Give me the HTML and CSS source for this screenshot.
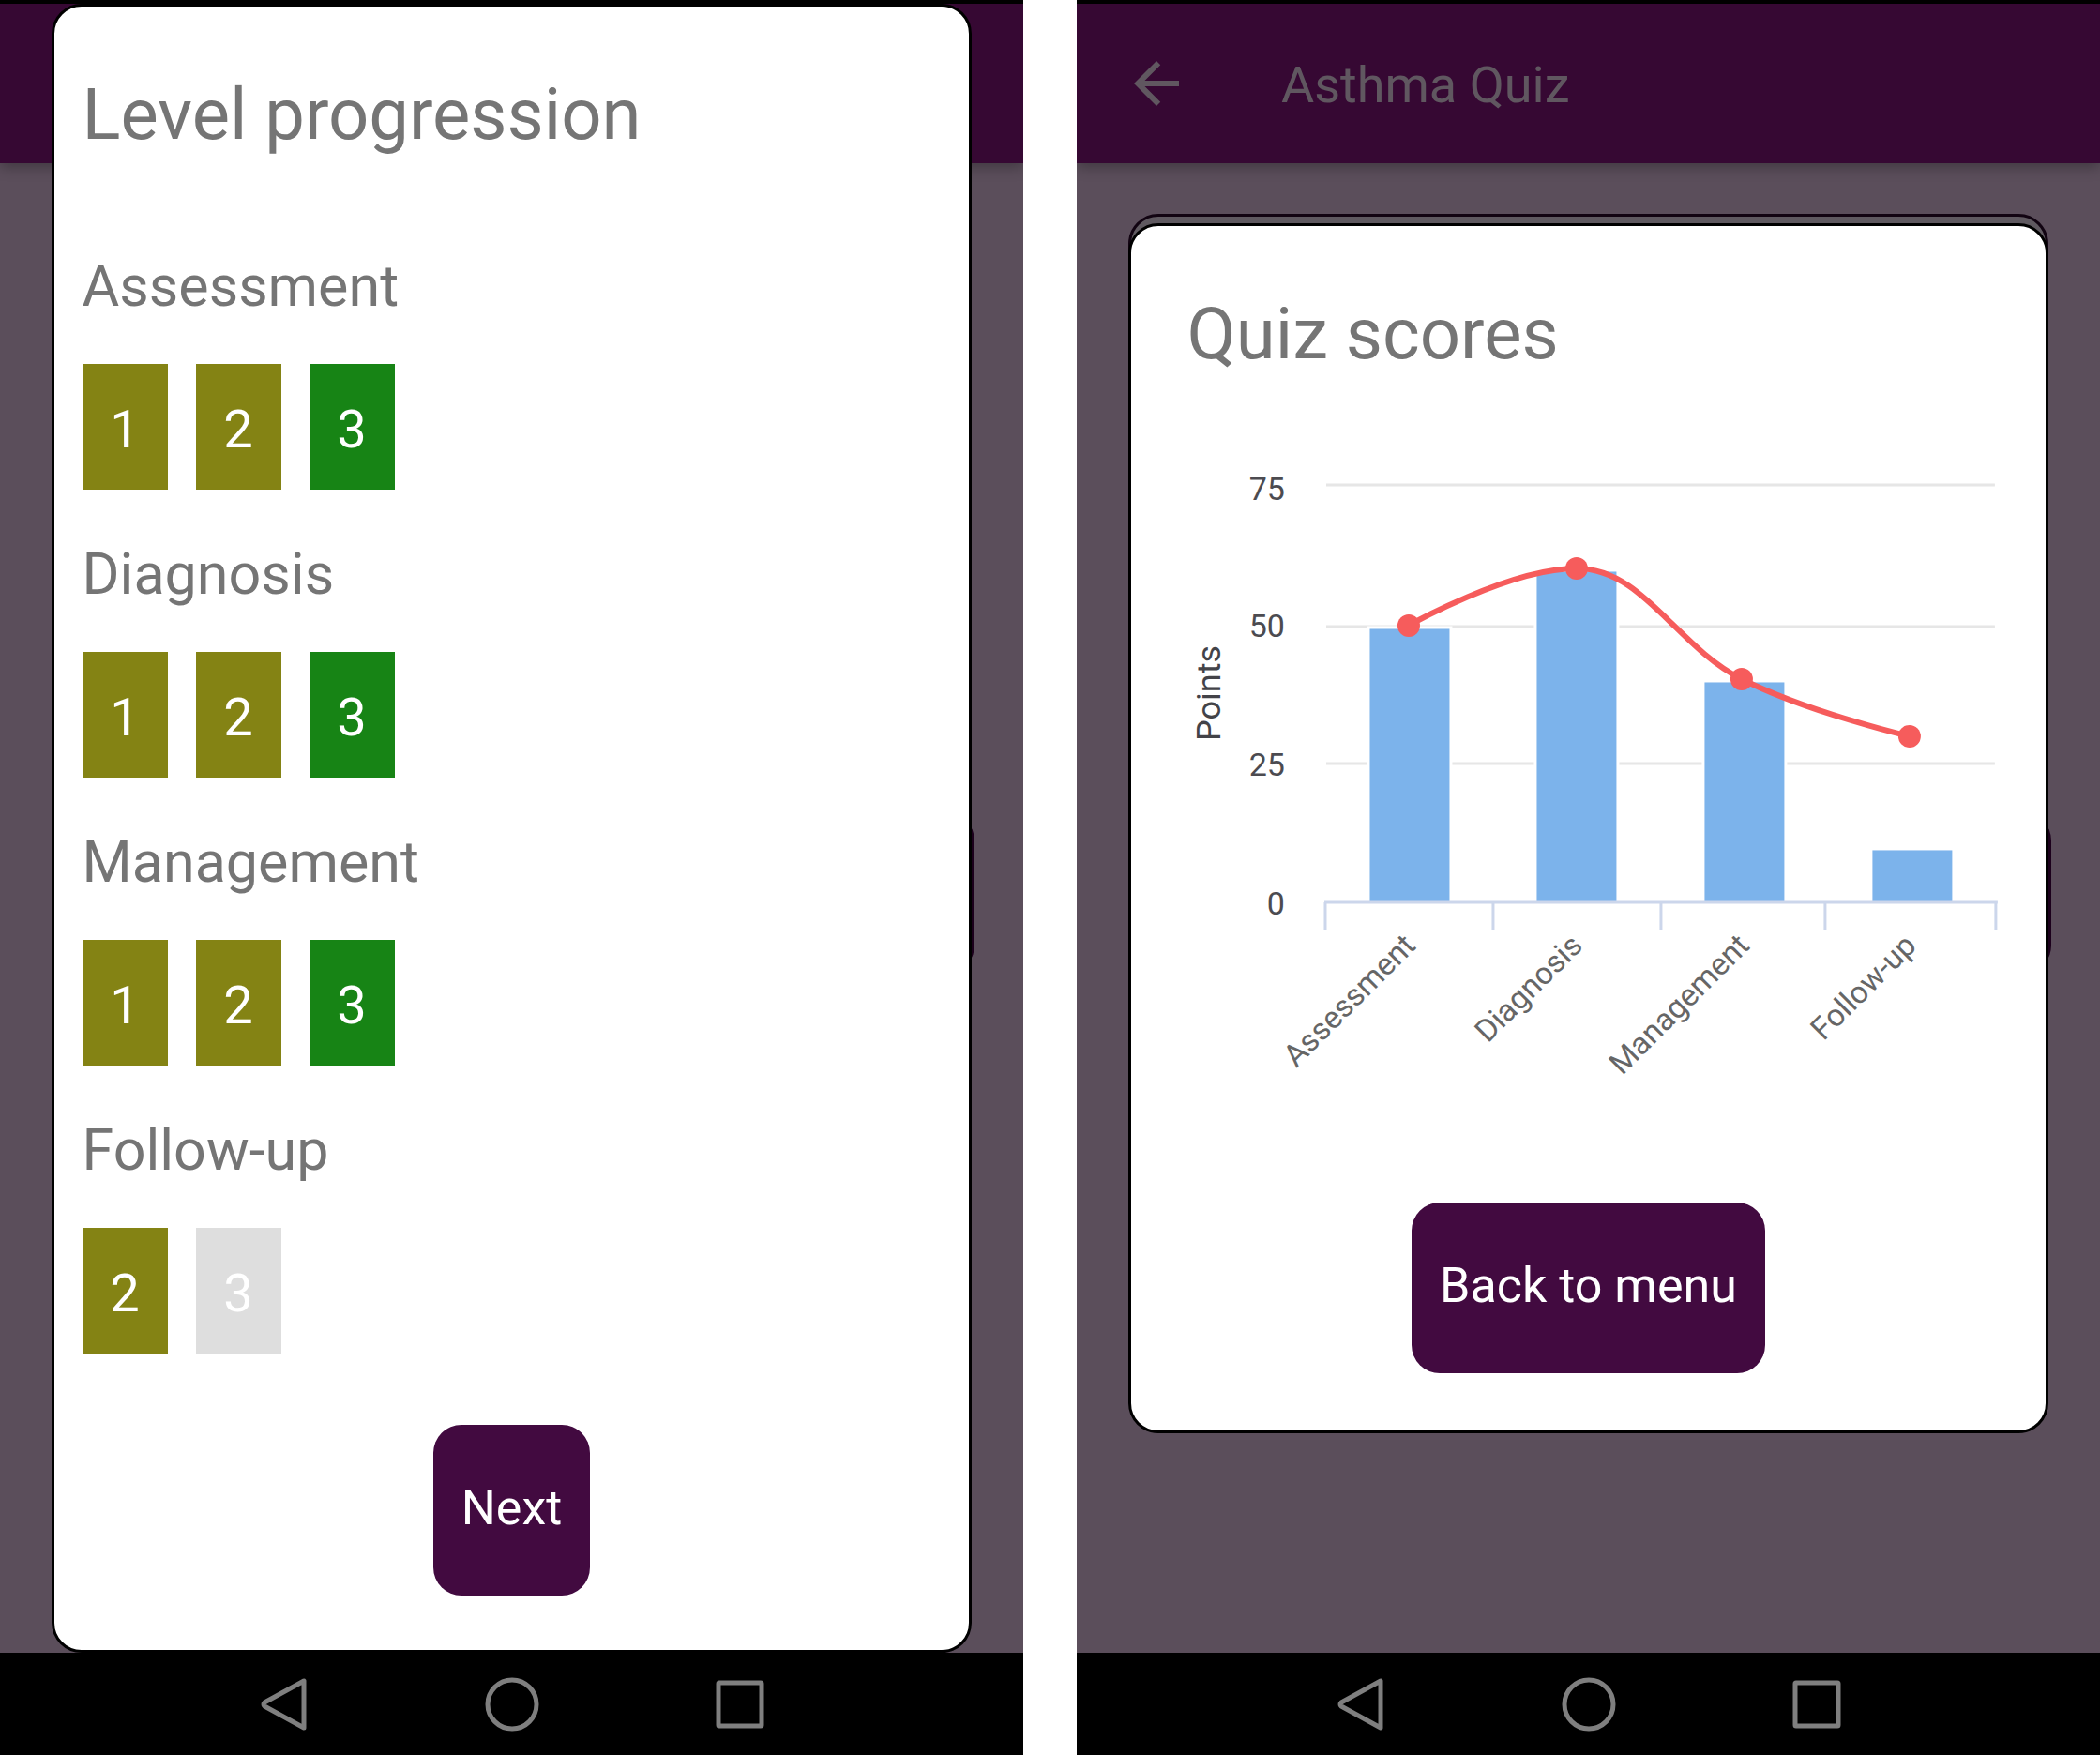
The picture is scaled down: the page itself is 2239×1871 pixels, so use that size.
FILE: index.html
```html
<!DOCTYPE html>
<html lang="en">
<head>
<meta charset="utf-8">
<meta name="viewport" content="width=device-width, initial-scale=1">
<title>Asthma Quiz</title>
<link rel="stylesheet" href="styles.css">
</head>
<body>
<main class="phones">

  <section class="phone">
    <div class="screen">
      <div class="backdrop">
        <header class="app-bar"></header>
        <div class="question-card"><div class="answer"></div></div>
      </div>
      <div class="dialog" role="dialog" aria-labelledby="levels-title">
        <h1 class="dialog-title" id="levels-title">Level progression</h1>
        <div class="topics">
          <section class="topic">
            <h2 class="topic-name">Assessment</h2>
            <ul class="levels">
              <li class="level passed">1</li>
              <li class="level passed">2</li>
              <li class="level current">3</li>
            </ul>
          </section>
          <section class="topic">
            <h2 class="topic-name">Diagnosis</h2>
            <ul class="levels">
              <li class="level passed">1</li>
              <li class="level passed">2</li>
              <li class="level current">3</li>
            </ul>
          </section>
          <section class="topic">
            <h2 class="topic-name">Management</h2>
            <ul class="levels">
              <li class="level passed">1</li>
              <li class="level passed">2</li>
              <li class="level current">3</li>
            </ul>
          </section>
          <section class="topic">
            <h2 class="topic-name">Follow-up</h2>
            <ul class="levels">
              <li class="level passed">2</li>
              <li class="level locked">3</li>
            </ul>
          </section>
        </div>
        <button class="action" type="button">Next</button>
      </div>
    </div>
    <nav class="system-nav">
      <button class="nav-key" type="button" aria-label="Back"><svg viewBox="0 0 58 58"><path d="M50 4v50L8 31q-2-2 0-4z"/></svg></button>
      <button class="nav-key" type="button" aria-label="Home"><svg viewBox="0 0 58 58"><circle cx="29" cy="29" r="26"/></svg></button>
      <button class="nav-key" type="button" aria-label="Recent apps"><svg viewBox="0 0 58 58"><rect x="6" y="6" width="46" height="46" rx="1"/></svg></button>
    </nav>
  </section>

  <section class="phone">
    <div class="screen">
      <div class="backdrop">
        <header class="app-bar">
          <button class="back" type="button" aria-label="Back"><svg viewBox="0 0 24 24"><path d="M20 11H7.83l5.59-5.59L12 4l-8 8 8 8 1.41-1.41L7.83 13H20v-2z"/></svg></button>
          <span class="app-title">Asthma Quiz</span>
        </header>
        <div class="question-card"><div class="answer"></div></div>
      </div>
      <div class="dialog scores" role="dialog" aria-labelledby="scores-title">
        <h1 class="dialog-title" id="scores-title">Quiz scores</h1>
        <svg class="chart" viewBox="0 0 916 720" role="img" aria-labelledby="scores-title">
          <g class="grid">
            <path d="M178 38H891M178 189H891M178 335H891"/>
          </g>
          <g class="bars">
            <rect x="223" y="190" width="88" height="295"/>
            <rect x="401" y="129" width="88" height="356"/>
            <rect x="580" y="247" width="88" height="238"/>
            <rect x="759" y="426" width="88" height="59"/>
          </g>
          <path class="axis" d="M176 483H894M177 483V512M356 483V512M535 483V512M710 483V512M892 483V512"/>
          <path class="trend" d="M266 188C266 188 373 127 445 127C516 127 551 210 621 245C693 281 800 306 800 306"/>
          <g class="points">
            <circle cx="266" cy="188" r="12"/>
            <circle cx="445" cy="127" r="12"/>
            <circle cx="621" cy="245" r="12"/>
            <circle cx="800" cy="306" r="12"/>
          </g>
          <g class="values">
            <text x="134" y="54">75</text>
            <text x="134" y="200">50</text>
            <text x="134" y="348">25</text>
            <text x="134" y="496">0</text>
          </g>
          <text class="axis-name" transform="translate(65 260) rotate(-90)">Points</text>
          <g class="categories">
            <text transform="translate(275 531) rotate(-45)">Assessment</text>
            <text transform="translate(453 531) rotate(-45)">Diagnosis</text>
            <text transform="translate(631 531) rotate(-45)">Management</text>
            <text transform="translate(809 531) rotate(-45)">Follow-up</text>
          </g>
        </svg>
        <button class="action" type="button">Back to menu</button>
      </div>
    </div>
    <nav class="system-nav">
      <button class="nav-key" type="button" aria-label="Back"><svg viewBox="0 0 58 58"><path d="M50 4v50L8 31q-2-2 0-4z"/></svg></button>
      <button class="nav-key" type="button" aria-label="Home"><svg viewBox="0 0 58 58"><circle cx="29" cy="29" r="26"/></svg></button>
      <button class="nav-key" type="button" aria-label="Recent apps"><svg viewBox="0 0 58 58"><rect x="6" y="6" width="46" height="46" rx="1"/></svg></button>
    </nav>
  </section>

</main>
</body>
</html>
```
FILE: styles.css
```css
* {
  box-sizing: border-box;
}

body {
  margin: 0;
  background: #fff;
  font-family: Roboto, "Liberation Sans", sans-serif;
}

button {
  padding: 0;
  border: 0;
  background: none;
  font: inherit;
  color: inherit;
}

svg {
  display: block;
}

.phones {
  display: grid;
  grid-template-columns: 1fr 1fr;
  gap: 57px;
  min-height: 100vh;
}

.phone {
  display: flex;
  flex-direction: column;
  background: #000;
  padding-top: 4px;
}

/* The dimmed app and the open dialog share one grid cell. */
.screen {
  flex: 1;
  display: grid;
  background: #5b4e5b;
}

.backdrop,
.dialog {
  grid-area: 1 / 1;
}

.backdrop {
  display: flex;
  flex-direction: column;
}

.app-bar {
  display: flex;
  align-items: center;
  gap: 97px;
  height: 170px;
  padding: 0 49px;
  background: #360833;
  box-shadow: 0 4px 14px rgba(0, 0, 0, 0.3);
  clip-path: inset(0 0 -24px 0);
  color: #605760;
}

.back svg {
  width: 72px;
  height: 72px;
  fill: currentColor;
}

.app-title {
  padding-top: 4px;
  font-size: 54px;
  line-height: 64px;
}

.question-card {
  flex: 1;
  width: 90%;
  margin: 54px auto 300px;
  padding-top: 635px;
  border: 3px solid #120412;
  border-radius: 32px;
  background: #5f5960;
}

.answer {
  height: 172px;
  margin-right: -6px;
  border-radius: 30px;
  background: #1c001c;
}

.dialog {
  z-index: 1;
  align-self: center;
  justify-self: center;
  display: flex;
  flex-direction: column;
  width: 90%;
  padding: 70px 30px 58px;
  border: 3px solid #000;
  border-radius: 32px;
  background: #fff;
  color: #757575;
}

.dialog-title {
  margin: 0;
  font-size: 76px;
  font-weight: 400;
  line-height: 90px;
}

.scores {
  padding-bottom: 61px;
}

.scores .dialog-title {
  padding-left: 30px;
}

.topics {
  display: flex;
  flex-direction: column;
  gap: 55px;
  margin: 103px 0 76px;
}

.topic-name {
  margin: 0 0 48px;
  font-size: 61px;
  font-weight: 400;
  line-height: 70px;
}

.levels {
  display: flex;
  gap: 30px;
  margin: 0;
  padding: 0;
  list-style: none;
}

.level {
  display: flex;
  align-items: center;
  justify-content: center;
  width: 91px;
  height: 134px;
  padding-top: 6px;
  color: #fff;
  font-size: 56px;
  line-height: 66px;
}

.passed {
  background: #848314;
}

.current {
  background: #178415;
}

.locked {
  background: #dedede;
}

.action {
  align-self: center;
  height: 182px;
  padding: 0 30px 4px;
  border-radius: 30px;
  background: #420a40;
  color: #fff;
  font-size: 52px;
  line-height: 60px;
}

.chart {
  width: 100%;
  margin: 78px 0 84px;
}

.grid {
  fill: none;
  stroke: #e6e6e6;
  stroke-width: 3;
}

.bars {
  fill: #7cb3eb;
  stroke: #fff;
  stroke-width: 3;
}

.axis {
  fill: none;
  stroke: #ccd6eb;
  stroke-width: 3;
}

.trend {
  fill: none;
  stroke: #f65c5c;
  stroke-width: 6;
}

.points {
  fill: #f65c5c;
}

.values {
  fill: #4c4b50;
  font-size: 34px;
  text-anchor: end;
}

.axis-name {
  fill: #434348;
  font-size: 36px;
  text-anchor: middle;
}

.categories {
  fill: #666;
  font-size: 33px;
  text-anchor: end;
}

.system-nav {
  display: flex;
  align-items: center;
  justify-content: center;
  gap: 185px;
  height: 109px;
  background: #000;
}

.nav-key svg {
  width: 58px;
  height: 58px;
  fill: none;
  stroke: #7f7f7f;
  stroke-width: 5;
  stroke-linejoin: round;
}
```
